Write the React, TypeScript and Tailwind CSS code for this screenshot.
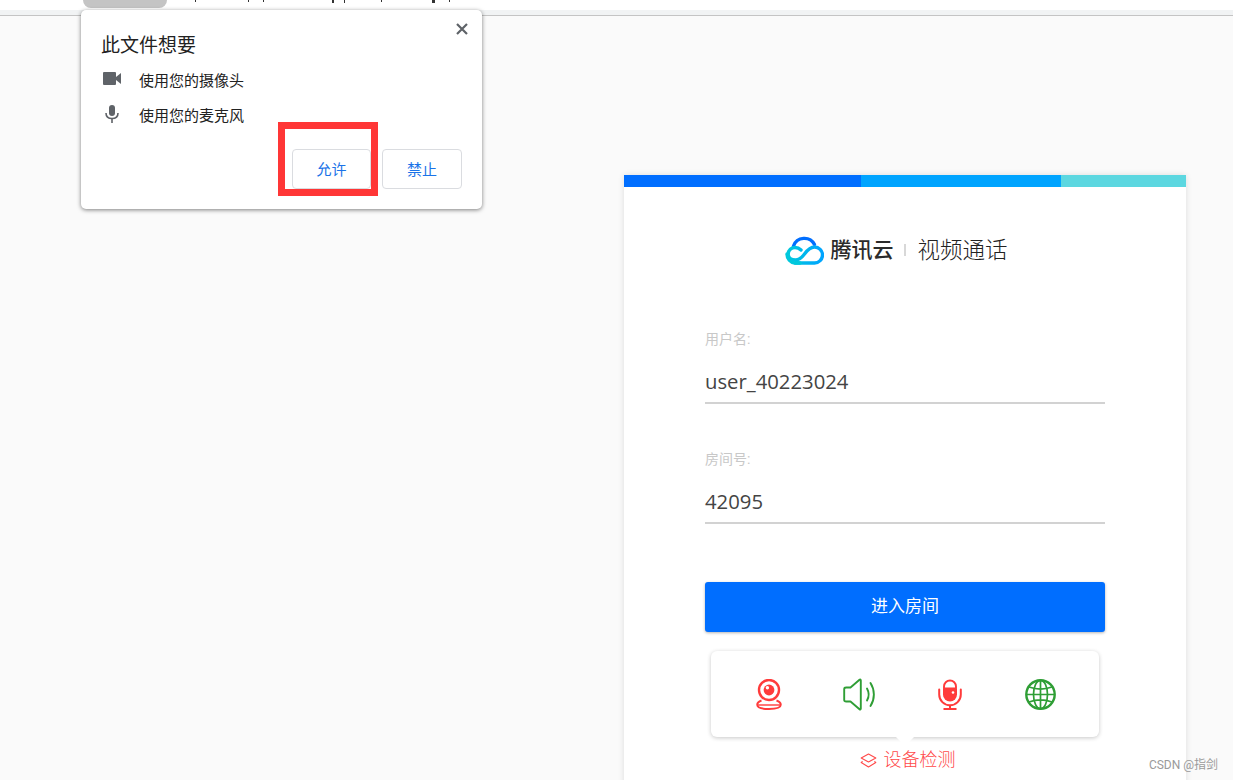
import React from "react";

const CJK = "font-['Open_Sans','Noto_Sans_CJK_SC',sans-serif]";

function Camera() {
  return (
    <svg width="26" height="31" viewBox="0 0 26 31" fill="none">
      <circle cx="13" cy="11" r="10" stroke="#ff3b3b" strokeWidth="2.4" />
      <circle cx="13" cy="11" r="5.4" fill="#ff3b3b" />
      <circle cx="11.4" cy="8.8" r="1.7" fill="#fff" />
      <path d="M5.5 21.5 C2.5 22.6 1.2 24 1.2 25.8 C1.2 28.4 6 30 13 30 C20 30 24.8 28.4 24.8 25.8 C24.8 24 23.5 22.6 20.5 21.5" stroke="#ff3b3b" strokeWidth="1.9" />
      <path d="M2 26 H24" stroke="#ff3b3b" strokeWidth="1.4" />
    </svg>
  );
}
function Speaker() {
  return (
    <svg width="33" height="33" viewBox="0 0 33 33" fill="none" stroke="#2f9e35" strokeWidth="1.9" strokeLinejoin="round" strokeLinecap="round">
      <path d="M1.2 11 C1.2 10 2.2 9.5 3.2 9.5 H7.5 L16.5 1.8 C17.2 1.2 17.8 1.6 17.8 2.6 V30.4 C17.8 31.4 17.2 31.8 16.5 31.2 L7.5 23.5 H3.2 C2.2 23.5 1.2 23 1.2 22 Z" />
      <path d="M24 10.5 C26.2 14.4 26.2 18.6 24 22.5" />
      <path d="M27.5 5 C32 12 32 21 27.5 28" />
    </svg>
  );
}
function Mic() {
  return (
    <svg width="24" height="31" viewBox="0 0 24 31" fill="none">
      <path d="M6 7.5 A6 6 0 0 1 18 7.5 V9.5 H6 Z" fill="#fff" stroke="#ff3b3b" strokeWidth="1.9" />
      <path d="M5 10 H19 V15.5 A7 7 0 0 1 5 15.5 Z" fill="#ff3b3b" />
      <circle cx="15" cy="13.5" r="1.3" fill="#fff" />
      <path d="M1.2 10.5 V15.5 A10.8 10.8 0 0 0 22.8 15.5 V10.5" stroke="#ff3b3b" strokeWidth="2" strokeLinecap="round" />
      <path d="M12 26 V29.5 M5.5 30 H18.5" stroke="#ff3b3b" strokeWidth="2" />
    </svg>
  );
}
function Globe() {
  return (
    <svg width="31" height="31" viewBox="0 0 31 31" fill="none" stroke="#2f9e35" strokeWidth="1.7">
      <circle cx="15.5" cy="15.5" r="14.2" strokeWidth="2.4" />
      <ellipse cx="15.5" cy="15.5" rx="7" ry="14.2" />
      <path d="M15.5 2 V29 M2 15.5 H29 M4 8 C11 10.5 20 10.5 27 8 M4 23 C11 20.5 20 20.5 27 23" />
    </svg>
  );
}
function Layers() {
  return (
    <svg width="17" height="15" viewBox="0 0 17 15" fill="none" stroke="#ff4a4a" strokeWidth="1.1" strokeLinejoin="round">
      <path d="M8.5 1 L15.8 5 L8.5 9 L1.2 5 Z" />
      <path d="M2.6 8.4 L1.2 9.5 L8.5 14 L15.8 9.5 L14.4 8.4" />
    </svg>
  );
}
function Cloud() {
  return (
    <svg width="39" height="30" viewBox="0 0 39 30" fill="none">
      <defs>
        <linearGradient id="cloudRing" x1="0" y1="0" x2="1" y2="0">
          <stop offset="0" stopColor="#00c8dc" />
          <stop offset="1" stopColor="#00a4ff" />
        </linearGradient>
      </defs>
      <path d="M8.5 11 A11.5 11.5 0 0 1 29.5 9.5" stroke="#006eff" strokeWidth="3.4" strokeLinecap="round" />
      <path d="M10 28 H29.5 A8 8 0 0 0 29.5 12 C25 12 22.5 15 19.5 19 C16.5 23 14 25 10.5 25 C6 25 3.2 22.5 3.2 19 C3.2 15.2 6.5 12.5 10 12.5 C12.5 12.5 14.5 13.5 16 15" stroke="url(#cloudRing)" strokeWidth="3.4" strokeLinecap="round" />
      <path d="M15 28 H10 A8.8 8.8 0 0 1 2 19" stroke="#00c8dc" strokeWidth="3.4" strokeLinecap="round" />
    </svg>
  );
}

function Field({ label, value }: { label: string; value: string }) {
  return (
    <div className="border-b-[2px] border-[#d2d2d2] h-[85px] flex flex-col">
      <div className="text-[14px] leading-[18px] text-[#c8c8c8] mt-[11px]">{label}</div>
      <div className={`text-[20.3px] leading-[28px] text-[#444444] mt-[19px] ${CJK}`}>{value}</div>
    </div>
  );
}

function Popup() {
  return (
    <div className="absolute left-[81px] top-[10px] w-[401px] h-[199px] bg-white rounded-[5px] shadow-[0_1px_4px_rgba(0,0,0,0.5)] text-[#222222]">
      <svg className="absolute right-[14px] top-[13px]" width="12" height="12" viewBox="0 0 12 12" stroke="#5f6368" strokeWidth="2.2">
        <path d="M1 1 L11 11 M11 1 L1 11" />
      </svg>
      <div className="pl-[20px] pt-[23px] text-[19px] leading-[26px]">此文件想要</div>
      <div className="flex items-center pl-[22px] mt-[10px] h-[24px]">
        <svg className="-mt-[6px]" width="18" height="13" viewBox="0 0 18 13" fill="#5f6368">
          <path d="M1 0 H12 A1 1 0 0 1 13 1 V5 L18 1 V12 L13 8 V12 A1 1 0 0 1 12 13 H1 A1 1 0 0 1 0 12 V1 A1 1 0 0 1 1 0 Z" />
        </svg>
        <span className="ml-[18px] text-[15px] leading-[20px]">使用您的摄像头</span>
      </div>
      <div className="flex items-center pl-[24px] mt-[11px] h-[24px]">
        <svg className="-mt-[4px]" width="14" height="18" viewBox="0 0 14 18" fill="#5f6368">
          <rect x="4" y="0" width="6" height="11" rx="3" />
          <path d="M1 8 C1 11.5 3.5 13.5 7 13.5 C10.5 13.5 13 11.5 13 8" fill="none" stroke="#5f6368" strokeWidth="1.6" />
          <rect x="6.2" y="13" width="1.6" height="5" />
        </svg>
        <span className="ml-[20px] text-[15px] leading-[20px]">使用您的麦克风</span>
      </div>
      <div className="flex justify-end gap-[11px] pr-[20px] mt-[21px]">
        <button className="w-[79px] h-[40px] pt-[2px] border border-[#dadce0] rounded-[4px] text-[15px] text-[#1a73e8] bg-white">允许</button>
        <button className="w-[80px] h-[40px] pt-[2px] border border-[#dadce0] rounded-[4px] text-[15px] text-[#1a73e8] bg-white">禁止</button>
      </div>
    </div>
  );
}

export default function App() {
  return (
    <div className="relative h-[780px] overflow-hidden bg-[#fafafa] font-['Roboto','Noto_Sans_CJK_SC',sans-serif]">
      <div className="h-[16px] border-b border-[#c4c4c4] flex flex-col">
        <div className="h-[10px] bg-white pl-[83px] flex items-start">
          <div className="w-[84px] h-[8px] bg-[#c4c4c4] rounded-b-[14px]" />
          <div className="w-[1px] h-[2px] bg-[#333] ml-[28px]" />
          <div className="w-[1px] h-[2px] bg-[#333] ml-[52px]" />
          <div className="w-[1px] h-[2px] bg-[#333] ml-[14px]" />
          <div className="w-[2px] h-[3px] bg-[#333] ml-[68px]" />
          <div className="w-[1px] h-[3px] bg-[#333] ml-[10px]" />
          <div className="w-[1px] h-[2px] bg-[#333] ml-[36px]" />
          <div className="w-[3px] h-[3px] bg-[#333] ml-[50px]" />
          <div className="w-[1px] h-[2px] bg-[#333] ml-[14px]" />
        </div>
        <div className="h-[5px] bg-[#f1f3f4]" />
      </div>
      <div className="flex justify-end pr-[47px] pt-[159px]">
        <div className="w-[562px] h-[700px] bg-white shadow-[0_0_6px_rgba(0,0,0,0.12)]">
          <div className="flex h-[12px]">
            <div className="w-[237px] bg-[#006eff]" />
            <div className="w-[200px] bg-[#00a4ff]" />
            <div className="w-[125px] bg-[#5cd7e0]" />
          </div>
          <div className="flex items-center justify-center h-[30px] mt-[48px] pr-[17px]">
            <Cloud />
            <span className="text-[21px] leading-[30px] font-medium text-[#2b2b2b] ml-[6px]">腾讯云</span>
            <span className="w-[2px] h-[12px] bg-[#d8d8d8] mx-[11px]" />
            <span className="text-[22.5px] leading-[30px] font-light text-[#222222]">视频通话</span>
          </div>
          <div className="px-[81px]">
            <div className="mt-[54px]">
              <Field label="用户名:" value="user_40223024" />
            </div>
            <div className="mt-[35px]">
              <Field label="房间号:" value="42095" />
            </div>
            <button className="block w-[400px] h-[50px] mt-[58px] bg-[#006eff] rounded-[3px] text-white text-[17px] shadow-[0_1px_3px_rgba(0,0,0,0.3)]">进入房间</button>
            <div className="relative w-[388px] h-[86px] mx-[6px] mt-[19px] bg-white rounded-[6px] shadow-[0_1px_4px_rgba(0,0,0,0.22)] grid grid-cols-4 items-center justify-items-center pl-[13px] pr-[13px]">
              <Camera />
              <Speaker />
              <Mic />
              <Globe />
              <div className="absolute left-[185px] top-[86px] w-0 h-0 border-x-[9px] border-x-transparent border-t-[9px] border-t-white" />
            </div>
            <div className="flex items-center justify-center mt-[10px] pl-[5px] gap-[7px] text-[18px] leading-[26px] text-[#ff4a4a] font-light">
              <Layers />
              <span>设备检测</span>
            </div>
          </div>
        </div>
      </div>
      <Popup />
      <div className="absolute left-[278px] top-[122px] w-[100px] h-[74px] border-[7px] border-[#ff3636]" />
      <div className="absolute right-[15px] top-[757px] text-[12px] leading-[16px] text-[#9a9a9a]">CSDN @指剑</div>
    </div>
  );
}
